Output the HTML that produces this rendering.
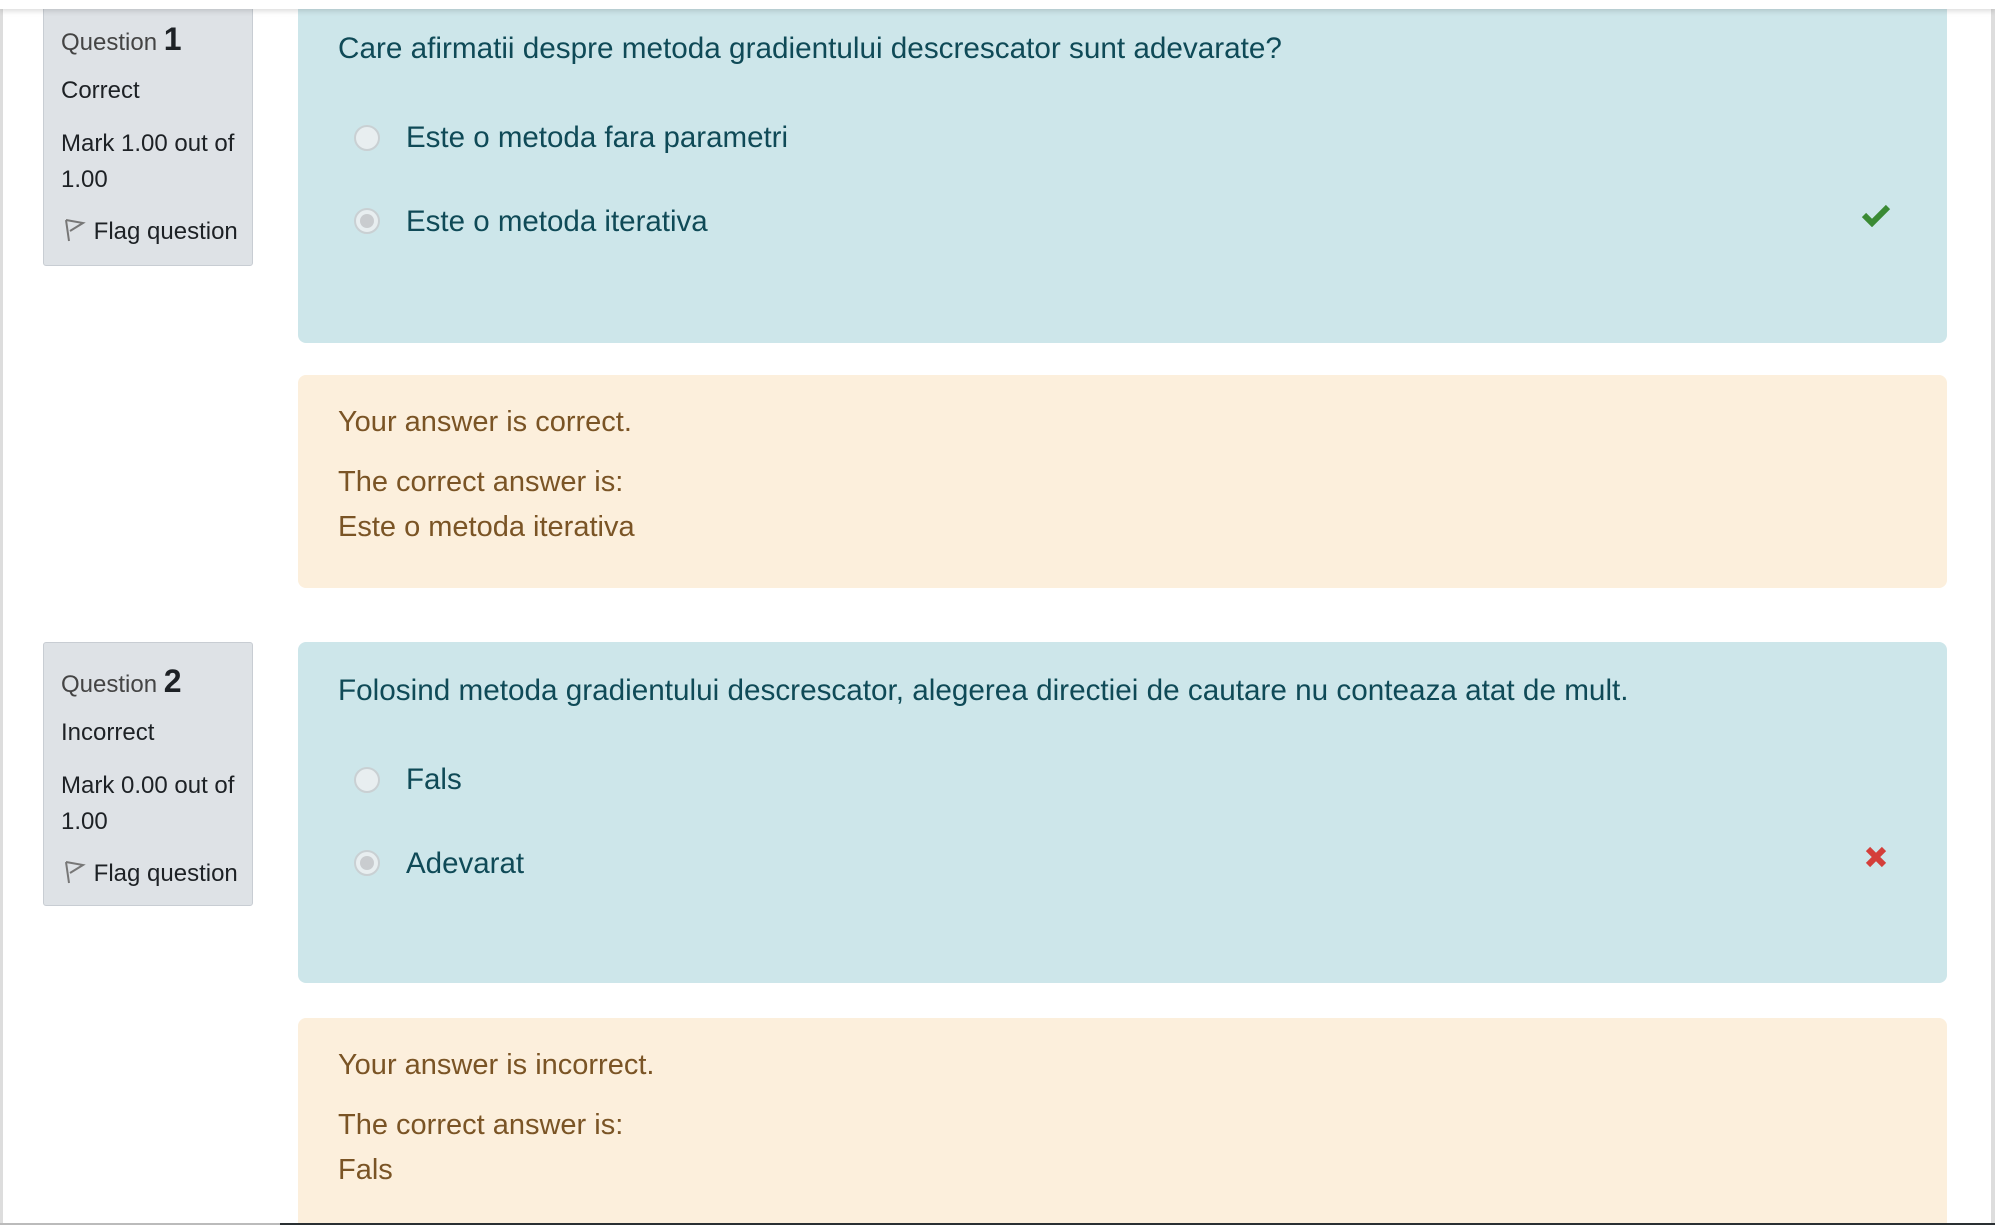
<!DOCTYPE html>
<html><head><meta charset="utf-8"><style>
html,body{margin:0;padding:0;width:1995px;height:1225px;overflow:hidden;background:#fff;font-family:"Liberation Sans",sans-serif;position:relative}
.abs{position:absolute}
.topb{left:0;top:0;width:1995px;height:9px;background:#fff;box-shadow:0 2px 6px rgba(0,0,0,.15);z-index:5}
.info{left:43px;width:208px;background:#dee2e6;border:1px solid #c8cdd3;border-radius:3px;color:#1d2125}
.info div{position:absolute;left:17px;font-size:24px;white-space:nowrap}
.q{left:298px;width:1649px;background:#cde6ea;border-radius:8px;color:#0f4a57}
.fb{left:298px;width:1649px;background:#fcefdc;border-radius:8px;color:#7a5425}
.t{position:absolute;white-space:nowrap;line-height:1}
.radio{position:absolute;width:22px;height:22px;border-radius:50%;border:2px solid #c9d0d3;background:#e8eef0}
.radio.sel::after{content:"";position:absolute;left:4px;top:4px;width:14px;height:14px;border-radius:50%;background:#c9cccf}
</style></head><body>
<div class="abs" style="left:0;top:0;width:3px;height:1225px;background:#ddd"></div>
<div class="abs" style="left:1991px;top:0;width:4px;height:1225px;background:#ddd"></div>
<div class="abs topb"></div>

<!-- Q1 -->
<div class="abs info" style="top:0;height:264px">
<div style="top:20px"><span style="font-weight:300;color:#444">Question</span> <b style="font-size:32px">1</b></div>
<div style="top:76px">Correct</div>
<div style="top:129px">Mark 1.00 out of</div>
<div style="top:165px">1.00</div>
<div style="top:217px"><svg width="26" height="24" viewBox="0 0 22 24" style="vertical-align:-3px"><path d="M3 2 L6 23 M3 2 L20 5 L7 13" fill="none" stroke="#777" stroke-width="2"/></svg> Flag question</div>
</div>
<div class="abs q" style="top:0;height:343px">
<div class="t" style="left:40px;top:34px;font-size:29.7px">Care afirmatii despre metoda gradientului descrescator sunt adevarate?</div>
<div class="radio" style="left:56px;top:125px"></div>
<div class="t" style="left:108px;top:123px;font-size:29.5px">Este o metoda fara parametri</div>
<div class="radio sel" style="left:56px;top:208px"></div>
<div class="t" style="left:108px;top:207px;font-size:29.5px">Este o metoda iterativa</div>
<svg class="abs" style="left:1563px;top:203px" width="30" height="24" viewBox="0 0 30 24"><path d="M3 12 L11 20 L27 4" fill="none" stroke="#3a8a34" stroke-width="6"/></svg>
</div>
<div class="abs fb" style="top:375px;height:213px">
<div class="t" style="left:40px;top:33px;font-size:29px">Your answer is correct.</div>
<div class="t" style="left:40px;top:93px;font-size:29px">The correct answer is:</div>
<div class="t" style="left:40px;top:138px;font-size:29px">Este o metoda iterativa</div>
</div>

<!-- Q2 -->
<div class="abs info" style="top:642px;height:262px">
<div style="top:20px"><span style="font-weight:300;color:#444">Question</span> <b style="font-size:32px">2</b></div>
<div style="top:76px">Incorrect</div>
<div style="top:129px">Mark 0.00 out of</div>
<div style="top:165px">1.00</div>
<div style="top:217px"><svg width="26" height="24" viewBox="0 0 22 24" style="vertical-align:-3px"><path d="M3 2 L6 23 M3 2 L20 5 L7 13" fill="none" stroke="#777" stroke-width="2"/></svg> Flag question</div>
</div>
<div class="abs q" style="top:642px;height:341px">
<div class="t" style="left:40px;top:34px;font-size:29.7px">Folosind metoda gradientului descrescator, alegerea directiei de cautare nu conteaza atat de mult.</div>
<div class="radio" style="left:56px;top:125px"></div>
<div class="t" style="left:108px;top:123px;font-size:29.5px">Fals</div>
<div class="radio sel" style="left:56px;top:208px"></div>
<div class="t" style="left:108px;top:207px;font-size:29.5px">Adevarat</div>
<svg class="abs" style="left:1566px;top:203px" width="24" height="24" viewBox="0 0 24 24"><path d="M4 4 L20 20 M20 4 L4 20" fill="none" stroke="#d43f3a" stroke-width="6"/></svg>
</div>
<div class="abs fb" style="top:1018px;height:220px">
<div class="t" style="left:40px;top:33px;font-size:29px">Your answer is incorrect.</div>
<div class="t" style="left:40px;top:93px;font-size:29px">The correct answer is:</div>
<div class="t" style="left:40px;top:138px;font-size:29px">Fals</div>
</div>
<div class="abs" style="left:0;top:1223px;width:280px;height:2px;background:#bbb"></div>
<div class="abs" style="left:280px;top:1223px;width:1715px;height:2px;background:#2a3033"></div>
</body></html>
